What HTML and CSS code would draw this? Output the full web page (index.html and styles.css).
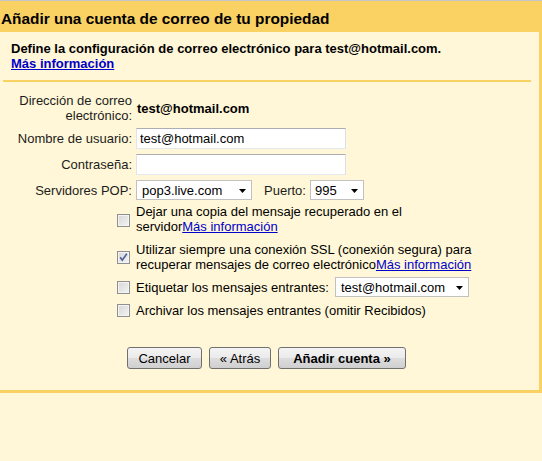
FILE: index.html
```html
<!DOCTYPE html>
<html lang="es">
<head>
<meta charset="utf-8">
<title>Añadir una cuenta de correo</title>
<link rel="stylesheet" href="styles.css">
</head>
<body>
<div class="topline"></div>
<div class="titlebar">Añadir una cuenta de correo de tu propiedad</div>
<div class="box">
  <div class="intro">
    Define la configuración de correo electrónico para test@hotmail.com.<br>
    <a href="#" class="link-bold">Más información</a>
  </div>
  <div class="sep"></div>
  <div class="form">
    <div class="row r-email">
      <div class="label">Dirección de correo<br>electrónico:</div>
      <div class="value">test@hotmail.com</div>
    </div>
    <div class="row">
      <div class="label">Nombre de usuario:</div>
      <div><input class="text" type="text" value="test@hotmail.com"></div>
    </div>
    <div class="row">
      <div class="label">Contraseña:</div>
      <div><input class="text" type="password" value=""></div>
    </div>
    <div class="row">
      <div class="label">Servidores POP:</div>
      <div class="inline">
        <div class="select sel-pop"><span>pop3.live.com</span><svg class="arrow" width="7" height="4" viewBox="0 0 7 4"><path d="M0 0H7L3.5 4Z" fill="#000"/></svg></div>
        <span class="port-label">Puerto:</span>
        <div class="select sel-port"><span>995</span><svg class="arrow" width="7" height="4" viewBox="0 0 7 4"><path d="M0 0H7L3.5 4Z" fill="#000"/></svg></div>
      </div>
    </div>
    <div class="row check-row r-a">
      <div class="cbcell"><span class="cb cb-a"></span></div>
      <div class="ctext">Dejar una copia del mensaje recuperado en el<br>servidor<a href="#">Más información</a></div>
    </div>
    <div class="row check-row r-b">
      <div class="cbcell"><span class="cb"><svg width="11" height="11" viewBox="0 0 11 11"><path d="M2.2 5.2 L4.3 8.2 L8.8 1.8" fill="none" stroke="#4b5d99" stroke-width="1.6"/></svg></span></div>
      <div class="ctext">Utilizar siempre una conexión SSL (conexión segura) para<br>recuperar mensajes de correo electrónico<a href="#">Más información</a></div>
    </div>
    <div class="row check-row r-c">
      <div class="cbcell"><span class="cb"></span></div>
      <div class="ctext inline">Etiquetar los mensajes entrantes:
        <div class="select sel-label"><span>test@hotmail.com</span><svg class="arrow" width="7" height="4" viewBox="0 0 7 4"><path d="M0 0H7L3.5 4Z" fill="#000"/></svg></div>
      </div>
    </div>
    <div class="row check-row r-d">
      <div class="cbcell"><span class="cb"></span></div>
      <div class="ctext">Archivar los mensajes entrantes (omitir Recibidos)</div>
    </div>
  </div>
  <div class="buttons">
    <button class="btn btn-cancel">Cancelar</button>
    <button class="btn btn-back">« Atrás</button>
    <button class="btn btn-add">Añadir cuenta »</button>
  </div>
</div>
</body>
</html>
```
FILE: styles.css
```css
html, body {
  margin: 0;
  padding: 0;
  background: #fff7d7;
  font-family: "Liberation Sans", Arial, sans-serif;
  font-size: 13px;
  color: #000;
}
.topline {
  height: 1px;
  background: #c3c5c8;
}
.titlebar {
  background: #fad163;
  font-size: 15.4px;
  font-weight: bold;
  line-height: 20px;
  height: 20px;
  padding: 8px 0 3px 1px;
  white-space: nowrap;
}
.box {
  border-right: 3px solid #fad163;
  border-bottom: 3px solid #fad163;
  padding: 9px 0 22px 0;
  height: 327px;
}
.intro {
  font-weight: bold;
  line-height: 15px;
  padding-left: 11px;
}
a {
  color: #0000cc;
  text-decoration: underline;
}
.link-bold {
  font-weight: bold;
}
.sep {
  height: 2px;
  background: #fad163;
  margin: 9px 8px 0 3px;
}
.form {
  display: flex;
  flex-direction: column;
  gap: 5px;
  margin-top: 11px;
  line-height: 15px;
}
.row {
  display: grid;
  grid-template-columns: 132px 1fr;
  column-gap: 4px;
  align-items: center;
}
.label {
  text-align: right;
  white-space: nowrap;
  color: #1c1c1c;
}
.value {
  font-weight: bold;
  padding-left: 1px;
}
.text {
  display: block;
  box-sizing: border-box;
  width: 210px;
  height: 21px;
  margin: 0;
  padding: 2px 3px;
  border: 1px solid;
  border-color: #abadb3 #dbdfe6 #e3e9ef #e2e3ea;
  background: #fff;
  font-family: "Liberation Sans", Arial, sans-serif;
  font-size: 13px;
  color: #000;
  outline: none;
}
.inline {
  display: flex;
  align-items: center;
  white-space: nowrap;
}
.select {
  box-sizing: border-box;
  display: flex;
  align-items: center;
  justify-content: space-between;
  height: 20px;
  border: 1px solid #c1c1c1;
  background: #fff;
  padding: 0 5px 0 4px;
}
.select .arrow {
  display: block;
  margin-top: 1px;
}
.sel-pop {
  width: 116px;
  padding-left: 5px;
}
.port-label {
  margin: 0 4px 0 12px;
  color: #1c1c1c;
}
.sel-port {
  width: 54px;
}
.sel-label {
  width: 134px;
  height: 20px;
  margin-left: 6px;
  padding-left: 5px;
}
.cbcell {
  display: flex;
  justify-content: flex-end;
}
.cb {
  box-sizing: border-box;
  width: 13px;
  height: 13px;
  margin-right: 2px;
  border: 1px solid #8f8f8f;
  background: linear-gradient(135deg, #d7d7d7 0%, #f3f3f3 100%);
  box-shadow: inset 0 0 0 1px #f4f4f4;
  display: flex;
  align-items: center;
  justify-content: center;
}
.cb svg {
  display: block;
}
.cb-a {
  margin-top: 3px;
}
.ctext {
  white-space: nowrap;
}
.r-a {
  margin-top: -1px;
}
.r-b {
  margin-top: 3px;
}
.r-d {
  margin-top: 1px;
}
.buttons {
  display: flex;
  gap: 7px;
  padding-left: 127px;
  margin-top: 29px;
}
.btn {
  box-sizing: border-box;
  height: 22px;
  margin: 0;
  padding: 0;
  border: 1px solid #707070;
  border-radius: 3px;
  background: linear-gradient(to bottom, #f4f4f4 0%, #ebebeb 48%, #dddddd 52%, #cfcfcf 100%);
  font-family: "Liberation Sans", Arial, sans-serif;
  font-size: 13px;
  line-height: 15px;
  color: #000;
  text-align: center;
}
.btn-cancel { width: 75px; }
.btn-back { width: 62px; }
.btn-add { width: 128px; font-weight: bold; }
```
